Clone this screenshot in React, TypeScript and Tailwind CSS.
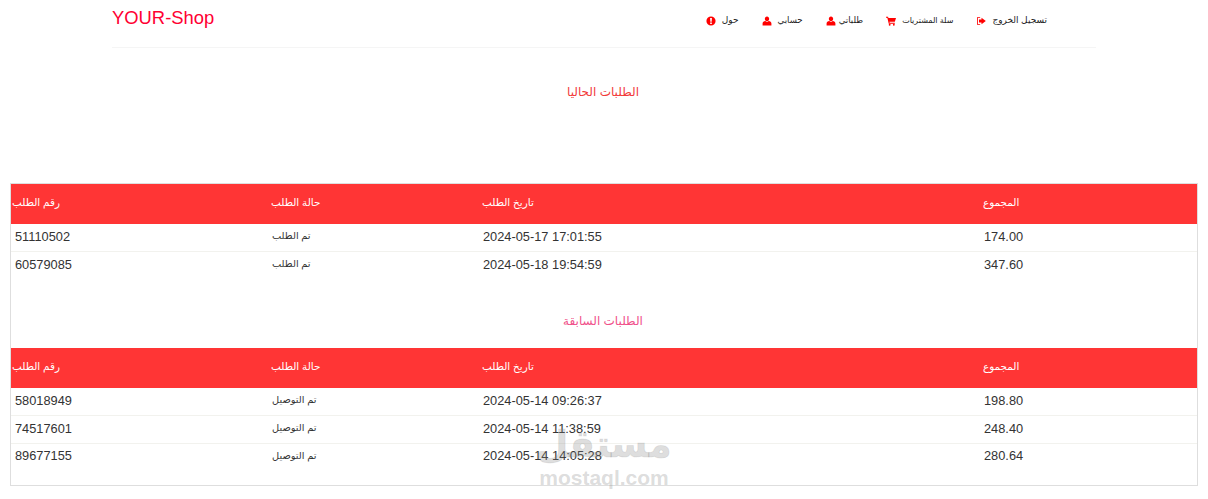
import type { ReactNode } from "react";

function Glyph({ children }: { children: ReactNode }) {
  return (
    <svg viewBox="0 0 12 12" className="h-[10px] w-[10px] shrink-0 fill-[#ff0000]">
      {children}
    </svg>
  );
}

const AboutIcon = () => (
  <Glyph>
    <path fillRule="evenodd" d="M6 .5a5.5 5.5 0 1 1 0 11 5.5 5.5 0 0 1 0-11ZM4.9 2.4l.3 4.6h1.6l.3-4.6H4.9Zm.1 5.4v1.8h2V7.8H5Z" />
  </Glyph>
);

const UserIcon = () => (
  <Glyph>
    <path d="M6 .5c1.6 0 2.6 1.2 2.6 2.8S7.6 6.4 6 6.4 3.4 4.9 3.4 3.3 4.4.5 6 .5ZM3.9 6.1c.5.6 1.3 1 2.1 1s1.6-.4 2.1-1c1.7.3 3.2 1.2 3.2 2.9v2.4H.7V9c0-1.7 1.5-2.6 3.2-2.9Z" />
  </Glyph>
);

const CartIcon = () => (
  <Glyph>
    <path d="M0 1h2.5l.4 1.4H12L10.6 7H4.1l.3 1h6.2v1.2H3.3L1.6 2.2H0V1Z" />
    <circle cx="4.4" cy="10.5" r="1.1" />
    <circle cx="9.4" cy="10.5" r="1.1" />
  </Glyph>
);

const LogoutIcon = () => (
  <Glyph>
    <path d="M5 1.5H1.2v9H5v-1H2.2v-7H5v-1Z" />
    <path d="M6.6 2 11.8 6 6.6 10V7.7H3.6V4.3h3V2Z" />
  </Glyph>
);

const navItems = [
  { label: "حول", icon: <AboutIcon />, row: "gap-[6px] text-[9px]" },
  { label: "حسابي", icon: <UserIcon />, row: "gap-[6px] text-[8.6px]" },
  { label: "طلباتي", icon: <UserIcon />, row: "gap-[3px] text-[8.6px]" },
  { label: "سلة المشتريات", icon: <CartIcon />, row: "gap-[6px] text-[8px]" },
  { label: "تسجيل الخروج", icon: <LogoutIcon />, row: "gap-[6px] text-[9px]" },
];

const currentOrders = [
  { id: "51110502", status: "تم الطلب", date: "2024-05-17 17:01:55", total: "174.00" },
  { id: "60579085", status: "تم الطلب", date: "2024-05-18 19:54:59", total: "347.60" },
];

const pastOrders = [
  { id: "58018949", status: "تم التوصيل", date: "2024-05-14 09:26:37", total: "198.80" },
  { id: "74517601", status: "تم التوصيل", date: "2024-05-14 11:38:59", total: "248.40" },
  { id: "89677155", status: "تم التوصيل", date: "2024-05-14 14:05:28", total: "280.64" },
];

type Order = (typeof currentOrders)[number];

function OrdersTable({ orders }: { orders: Order[] }) {
  return (
    <table className="w-full table-fixed border-collapse">
      <colgroup>
        <col className="w-[260px]" />
        <col className="w-[211px]" />
        <col className="w-[501px]" />
        <col />
      </colgroup>
      <thead>
        <tr className="h-10 bg-[#ff3535] text-left text-[10.4px] text-white">
          <th className="pb-[2px] pl-px font-normal">رقم الطلب</th>
          <th className="pb-[2px] font-normal">حالة الطلب</th>
          <th className="pb-[2px] font-normal">تاريخ الطلب</th>
          <th className="pb-[2px] font-normal">المجموع</th>
        </tr>
      </thead>
      <tbody>
        {orders.map((order) => (
          <tr key={order.id} className="h-[27.5px] border-b border-[#f2f2ee] text-[12.8px] text-[#333] last:border-b-0">
            <td className="pb-[2px] pl-1">{order.id}</td>
            <td className="pb-[2px] pl-px text-[9.8px]">{order.status}</td>
            <td className="pb-[2px] pl-px">{order.date}</td>
            <td className="pb-[2px] pl-px">{order.total}</td>
          </tr>
        ))}
      </tbody>
    </table>
  );
}

export default function App() {
  return (
    <div className="relative h-[499px] overflow-hidden bg-white font-['Liberation_Sans','DejaVu_Sans',sans-serif]">
      {/* Header */}
      <div className="mx-[112px] flex h-12 items-start justify-between border-b border-[#f5f5f5]">
        <div className="mt-1 text-[18.4px] text-[#ff0033]">YOUR-Shop</div>
        <div className="mr-[49px] mt-[14px] flex items-center gap-[23px] text-[#222]">
          {navItems.map((item) => (
            <div key={item.label} className={`flex items-center ${item.row}`}>
              {item.icon}
              <span>{item.label}</span>
            </div>
          ))}
        </div>
      </div>

      <h2 className="mt-[35px] pr-[2px] text-center text-[12px] font-normal text-[#f23a3a]">الطلبات الحاليا</h2>

      {/* Orders */}
      <div className="mx-[10px] mt-[82px] h-[303px] border border-[#dedede]">
        <OrdersTable orders={currentOrders} />
        <h2 className="mt-[33px] mb-[18px] pr-[2px] text-center text-[12px] font-normal text-[#f0508a]">الطلبات السابقة</h2>
        <OrdersTable orders={pastOrders} />
      </div>

      {/* Watermark */}
      <div className="pointer-events-none absolute left-[538px] top-[422px] flex w-[132px] flex-col items-center text-[#8a8a8a]/30">
        <div className="text-[37px] leading-[46px] font-bold [-webkit-text-stroke:1px_rgba(138,138,138,0.15)]">مستقل</div>
        <div className="text-[21px] leading-[20px] font-bold">mostaql.com</div>
      </div>
    </div>
  );
}
